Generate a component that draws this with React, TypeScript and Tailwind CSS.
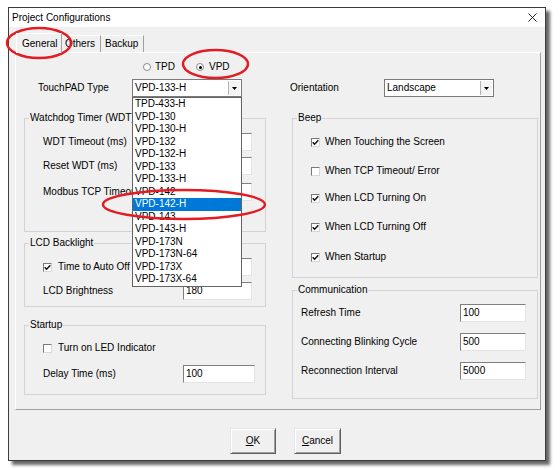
import React from "react";

function Check({ on }: { on: boolean }) {
  return (
    <span className="flex h-[9px] w-[9px] shrink-0 items-center justify-center border border-t-[#7a7a7a] border-l-[#7a7a7a] border-b-[#d8d8d8] border-r-[#d8d8d8] bg-white">
      {on && (
        <svg width="7" height="7" viewBox="0 0 7 7">
          <path d="M0.7 3.2 L2.6 5.2 L6.3 1.2" stroke="#111" strokeWidth="1.5" fill="none" />
        </svg>
      )}
    </span>
  );
}

function Radio({ on }: { on: boolean }) {
  return (
    <span className="flex h-[8px] w-[8px] shrink-0 items-center justify-center rounded-full border border-[#8a8a8a] bg-white">
      {on && <span className="h-[3px] w-[3px] rounded-full bg-black" />}
    </span>
  );
}

function Field({ value, className }: { value: string; className: string }) {
  return (
    <div
      className={
        "flex h-[18px] items-center border border-t-[#7f7f7f] border-l-[#7f7f7f] border-b-[#e3e3e3] border-r-[#e3e3e3] bg-white pl-[2px] " +
        className
      }
    >
      {value}
    </div>
  );
}

function Arrow() {
  return (
    <span className="mr-[1px] flex h-[14px] w-[12px] items-center justify-center border-l border-[#b4b4b4] bg-[#f4f4f4]">
      <svg width="5" height="3" viewBox="0 0 5 3">
        <path d="M0 0 H5 L2.5 3 Z" fill="#000" />
      </svg>
    </span>
  );
}

function Combo({ value }: { value: string }) {
  return (
    <div className="flex h-[18px] w-[110px] items-center justify-between border border-[#7a7a7a] bg-white pl-[2px]">
      <span>{value}</span>
      <Arrow />
    </div>
  );
}

function Group({
  title,
  className,
  children,
}: {
  title: string;
  className: string;
  children: React.ReactNode;
}) {
  return (
    <fieldset className={"border border-[#d3d3d3] " + className}>
      <legend className="ml-[4px] px-[1px] leading-[12px]">{title}</legend>
      {children}
    </fieldset>
  );
}

const items = [
  "TPD-433-H",
  "VPD-130",
  "VPD-130-H",
  "VPD-132",
  "VPD-132-H",
  "VPD-133",
  "VPD-133-H",
  "VPD-142",
  "VPD-142-H",
  "VPD-143",
  "VPD-143-H",
  "VPD-173N",
  "VPD-173N-64",
  "VPD-173X",
  "VPD-173X-64",
];

export default function App() {
  return (
    <div className="relative h-[470px] w-[560px] overflow-hidden bg-white pl-[8px] pt-[7px] font-['Liberation_Sans',Arial,sans-serif] text-[10px] leading-[12px] text-black">
      {/* window */}
      <div className="flex h-[454px] w-[538px] flex-col border border-[#3c3c3c] bg-[#f0f0f0] shadow-[4px_4px_3px_rgba(0,0,0,0.6)]">
        {/* title bar */}
        <div className="flex h-[19px] items-center justify-between bg-white pl-[3px] pr-[8px]">
          <span>Project Configurations</span>
          <svg width="9" height="9" viewBox="0 0 9 9">
            <path d="M0.5 0.5 L8.5 8.5 M8.5 0.5 L0.5 8.5" stroke="#222" strokeWidth="1" />
          </svg>
        </div>

        {/* tabs */}
        <div className="ml-[7px] mt-[6px] flex h-[19px] items-end">
          <div className="relative z-10 -mb-[1px] flex h-[20px] w-[46px] items-center border-l border-t border-r border-l-white border-t-white border-r-[#a0a0a0] bg-[#f0f0f0] pl-[5px]">
            General
          </div>
          <div className="flex h-[17px] w-[39px] items-center border-t border-r border-t-white border-r-[#a0a0a0] pl-[3px]">
            Others
          </div>
          <div className="flex h-[17px] w-[43px] items-center border-t border-r border-t-white border-r-[#a0a0a0] pl-[4px]">
            Backup
          </div>
        </div>

        {/* tab panel */}
        <div className="ml-[6px] flex h-[358px] w-[526px] flex-col border border-t-white border-l-white border-b-[#a0a0a0] border-r-[#a0a0a0]">
          {/* radios */}
          <div className="ml-[127px] mt-[7px] flex h-[14px] items-center">
            <Radio on={false} />
            <span className="ml-[4px]">TPD</span>
            <span className="ml-[21px]">
              <Radio on={true} />
            </span>
            <span className="ml-[5px]">VPD</span>
          </div>

          {/* type row */}
          <div className="ml-[22px] mt-[5px] flex h-[18px] items-center">
            <span className="w-[94px]">TouchPAD Type</span>
            <Combo value="VPD-133-H" />
            <span className="ml-[48px] w-[94px]">Orientation</span>
            <Combo value="Landscape" />
          </div>

          {/* columns */}
          <div className="ml-[8px] mt-[15px] flex">
            <div className="flex w-[242px] flex-col">
              <Group title="Watchdog Timer (WDT)" className="h-[120px]">
                <div className="mt-[9px] flex h-[18px] items-center pl-[18px]">
                  <span className="w-[140px]">WDT Timeout (ms)</span>
                  <Field value="" className="w-[69px]" />
                </div>
                <div className="mt-[6px] flex h-[18px] items-center pl-[18px]">
                  <span className="w-[140px]">Reset WDT (ms)</span>
                  <Field value="" className="w-[69px]" />
                </div>
                <div className="mt-[8px] flex h-[18px] items-center pl-[18px]">
                  <span className="w-[140px] whitespace-nowrap">Modbus TCP Timeout (ms)</span>
                  <Field value="" className="w-[69px]" />
                </div>
              </Group>

              <Group title="LCD Backlight" className="mt-[5px] h-[70px]">
                <div className="mt-[9px] flex h-[18px] items-center pl-[18px]">
                  <span className="flex w-[140px] items-center">
                    <Check on={true} />
                    <span className="ml-[6px]">Time to Auto Off</span>
                  </span>
                  <Field value="" className="w-[69px]" />
                </div>
                <div className="mt-[6px] flex h-[18px] items-center pl-[18px]">
                  <span className="w-[140px]">LCD Brightness</span>
                  <Field value="180" className="w-[69px]" />
                </div>
              </Group>

              <Group title="Startup" className="mt-[12px] h-[76px]">
                <div className="mt-[8px] flex h-[18px] items-center pl-[18px]">
                  <Check on={false} />
                  <span className="ml-[6px]">Turn on LED Indicator</span>
                </div>
                <div className="mt-[8px] flex h-[18px] items-center pl-[18px]">
                  <span className="w-[140px]">Delay Time (ms)</span>
                  <Field value="100" className="w-[72px]" />
                </div>
              </Group>
            </div>

            <div className="ml-[26px] flex w-[246px] flex-col">
              <Group title="Beep" className="h-[166px]">
                <div className="mt-[11px] flex h-[14px] items-center pl-[18px]">
                  <Check on={true} />
                  <span className="ml-[5px]">When Touching the Screen</span>
                </div>
                <div className="mt-[15px] flex h-[14px] items-center pl-[18px]">
                  <Check on={false} />
                  <span className="ml-[5px]">When TCP Timeout/ Error</span>
                </div>
                <div className="mt-[13px] flex h-[14px] items-center pl-[18px]">
                  <Check on={true} />
                  <span className="ml-[5px]">When LCD Turning On</span>
                </div>
                <div className="mt-[15px] flex h-[14px] items-center pl-[18px]">
                  <Check on={true} />
                  <span className="ml-[5px]">When LCD Turning Off</span>
                </div>
                <div className="mt-[16px] flex h-[14px] items-center pl-[18px]">
                  <Check on={true} />
                  <span className="ml-[5px]">When Startup</span>
                </div>
              </Group>

              <Group title="Communication" className="mt-[6px] h-[115px]">
                <div className="mt-[8px] flex h-[18px] items-center pl-[8px]">
                  <span className="w-[159px]">Refresh Time</span>
                  <Field value="100" className="w-[66px]" />
                </div>
                <div className="mt-[11px] flex h-[18px] items-center pl-[8px]">
                  <span className="w-[159px]">Connecting Blinking Cycle</span>
                  <Field value="500" className="w-[66px]" />
                </div>
                <div className="mt-[11px] flex h-[18px] items-center pl-[8px]">
                  <span className="w-[159px]">Reconnection Interval</span>
                  <Field value="5000" className="w-[66px]" />
                </div>
              </Group>
            </div>
          </div>
        </div>

        {/* buttons */}
        <div className="ml-[221px] mt-[18px] flex gap-[18px]">
          <button className="flex h-[26px] w-[46px] items-center justify-center border border-t-[#e6e6e6] border-l-[#e6e6e6] border-b-[#5f5f5f] border-r-[#5f5f5f] bg-[#f0f0f0] shadow-[inset_1px_1px_0_#ffffff,inset_-1px_-1px_0_#a0a0a0]">
            <span>
              <span className="underline">O</span>K
            </span>
          </button>
          <button className="flex h-[26px] w-[47px] items-center justify-center border border-t-[#e6e6e6] border-l-[#e6e6e6] border-b-[#5f5f5f] border-r-[#5f5f5f] bg-[#f0f0f0] shadow-[inset_1px_1px_0_#ffffff,inset_-1px_-1px_0_#a0a0a0]">
            <span>
              <span className="underline">C</span>ancel
            </span>
          </button>
        </div>
      </div>

      {/* dropdown list (open) */}
      <div className="absolute left-[132px] top-[97px] flex h-[190px] w-[110px] flex-col border border-[#646464] bg-white">
        {items.map((it) => (
          <div
            key={it}
            className={
              it === "VPD-142-H"
                ? "h-[12.5px] bg-[#0078d7] pl-[2px] leading-[12.5px] text-white"
                : "h-[12.5px] pl-[2px] leading-[12.5px]"
            }
          >
            {it}
          </div>
        ))}
      </div>

      {/* red annotation ellipses */}
      <svg className="pointer-events-none absolute left-0 top-0" width="560" height="470" viewBox="0 0 560 470">
        <ellipse cx="39" cy="43" rx="32" ry="15" fill="none" stroke="#e31b23" strokeWidth="2.5" />
        <ellipse cx="215.5" cy="64" rx="32.5" ry="14" fill="none" stroke="#e31b23" strokeWidth="2.5" />
        <ellipse cx="184" cy="204.5" rx="81" ry="14.5" fill="none" stroke="#e31b23" strokeWidth="2.5" />
      </svg>
    </div>
  );
}
